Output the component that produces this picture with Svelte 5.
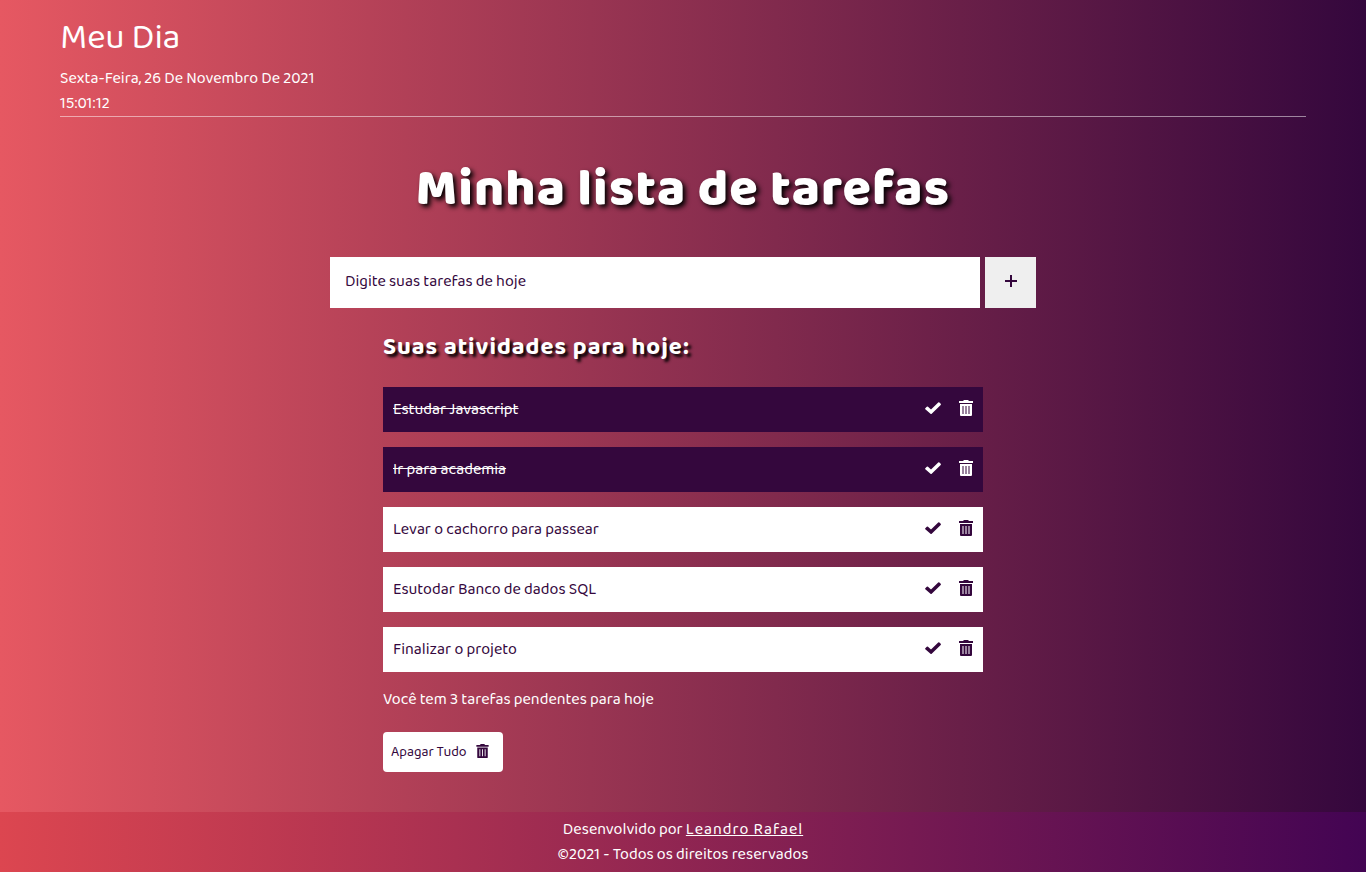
<script>
  let draft = $state('');
  let nextId = 6;
  let tasks = $state([
    { id: 1, text: 'Estudar Javascript', done: true },
    { id: 2, text: 'Ir para academia', done: true },
    { id: 3, text: 'Levar o cachorro para passear', done: false },
    { id: 4, text: 'Esutodar Banco de dados SQL', done: false },
    { id: 5, text: 'Finalizar o projeto', done: false }
  ]);
  let pending = $derived(tasks.filter((t) => !t.done).length);

  function add(event) {
    event.preventDefault();
    const text = draft.trim();
    if (!text) return;
    tasks.push({ id: nextId++, text, done: false });
    draft = '';
  }

  function remove(id) {
    tasks = tasks.filter((t) => t.id !== id);
  }
</script>

{#snippet trash()}
  <svg class="trash" viewBox="0 0 14 16" aria-hidden="true">
    <path fill-rule="evenodd" d="M0 1h4l1-1h4l1 1h4v2H0zM1 4h12v11a1 1 0 0 1-1 1H2a1 1 0 0 1-1-1zM3.5 6v8h1V6zM6.5 6v8h1V6zM9.5 6v8h1V6z" />
  </svg>
{/snippet}

<div class="page">
  <header>
    <p class="brand">Meu Dia</p>
    <p>Sexta-Feira, 26 De Novembro De 2021</p>
    <p>15:01:12</p>
  </header>

  <main>
    <h1>Minha lista de tarefas</h1>

    <form onsubmit={add}>
      <input type="text" aria-label="Nova tarefa" placeholder="Digite suas tarefas de hoje" bind:value={draft} />
      <button class="add" aria-label="Adicionar">
        <svg viewBox="0 0 12 12" aria-hidden="true"><path d="M5 0h2v5h5v2H7v5H5V7H0V5h5z" /></svg>
      </button>
    </form>

    <section>
      <h2>Suas atividades para hoje:</h2>
      <ul>
        {#each tasks as task (task.id)}
          <li class:done={task.done}>
            <span class="text">{task.text}</span>
            <button class="icon" aria-label="Concluir" onclick={() => (task.done = !task.done)}>
              <svg class="check" viewBox="0 0 16 12" aria-hidden="true">
                <path d="M.3 6.2 1.8 4.7q.6-.5 1.2 0L6 7.5 13.2.4q.6-.5 1.2 0l1.3 1.3q.5.6 0 1.2L6.7 11.7q-.6.5-1.2 0L.3 7.2q-.4-.5 0-1z" />
              </svg>
            </button>
            <button class="icon" aria-label="Apagar" onclick={() => remove(task.id)}>
              {@render trash()}
            </button>
          </li>
        {/each}
      </ul>
      <p class="pending">Você tem {pending} tarefas pendentes para hoje</p>
      <button class="clear" onclick={() => (tasks = [])}>Apagar Tudo {@render trash()}</button>
    </section>
  </main>

  <footer>
    <p>Desenvolvido por <a href="#leandro">Leandro Rafael</a></p>
    <p>©2021 - Todos os direitos reservados</p>
  </footer>
</div>

<style>
  :global(body) {
    margin: 0;
  }

  .page,
  .page * {
    box-sizing: border-box;
  }

  .page {
    display: flex;
    flex-direction: column;
    min-height: 100vh;
    color: #fff;
    font-family: 'Baloo 2', 'Noto Sans', sans-serif;
    font-size: 16px;
    font-weight: 400;
    line-height: 25px;
    background: linear-gradient(to right, #e65862, #34073d);
  }

  p,
  h1,
  h2,
  ul {
    margin: 0;
    padding: 0;
  }

  header {
    margin: 0 60px;
    padding-top: 8px;
    border-bottom: 1px solid rgba(255, 255, 255, 0.5);
  }

  .brand {
    padding-top: 2px;
    font-size: 35px;
    font-weight: 400;
    line-height: 56px;
  }

  main {
    flex: 1;
    display: flex;
    flex-direction: column;
    align-items: center;
    padding: 33px 20px 40px;
  }

  h1 {
    font-size: 52px;
    font-weight: 800;
    line-height: 80px;
    letter-spacing: 1px;
    text-shadow: 3px 3px 5px #000;
  }

  form {
    display: flex;
    gap: 5px;
    width: 100%;
    max-width: 706px;
    margin-top: 27px;
  }

  input {
    flex: 1;
    min-width: 0;
    height: 51px;
    padding: 0 15px 2px;
    border: 0;
    border-radius: 0;
    background: #fff;
    color: #34073d;
    font: inherit;
  }

  input::placeholder {
    color: #34073d;
    opacity: 1;
  }

  button {
    padding: 0;
    border: 0;
    font: inherit;
    color: #34073d;
    cursor: pointer;
  }

  svg {
    display: block;
    fill: currentColor;
  }

  .add {
    display: grid;
    place-items: center;
    width: 51px;
    padding-bottom: 3px;
    background: #efefef;
  }

  .add svg {
    width: 12px;
    height: 12px;
  }

  section {
    width: 100%;
    max-width: 600px;
    margin-top: 20px;
  }

  h2 {
    font-size: 24px;
    font-weight: 700;
    line-height: 40px;
    letter-spacing: 1px;
    text-shadow: 3px 3px 3px #000;
  }

  ul {
    display: grid;
    gap: 15px;
    margin-top: 19px;
    list-style: none;
  }

  li {
    display: flex;
    align-items: center;
    gap: 18px;
    min-height: 45px;
    padding: 0 10px;
    background: #fff;
    color: #34073d;
  }

  .text {
    flex: 1;
  }

  .done {
    background: #34073d;
    color: #fff;
  }

  .done .text {
    text-decoration: line-through;
  }

  .icon {
    padding-bottom: 4px;
    background: none;
    color: inherit;
  }

  .check {
    width: 16px;
    height: 12px;
  }

  .trash {
    width: 14px;
    height: 16px;
  }

  .pending {
    margin-top: 15px;
  }

  .clear {
    display: flex;
    align-items: center;
    gap: 9px;
    min-width: 120px;
    height: 40px;
    margin-top: 20px;
    padding: 0 8px;
    border-radius: 4px;
    background: #fff;
    font-size: 14px;
  }

  .clear .trash {
    width: 13px;
    height: 14px;
    margin-bottom: 2px;
  }

  footer {
    padding: 5px 20px;
    text-align: center;
    background: linear-gradient(to right, #dc4650, #430453);
  }

  a {
    color: inherit;
    letter-spacing: 1px;
  }
</style>
